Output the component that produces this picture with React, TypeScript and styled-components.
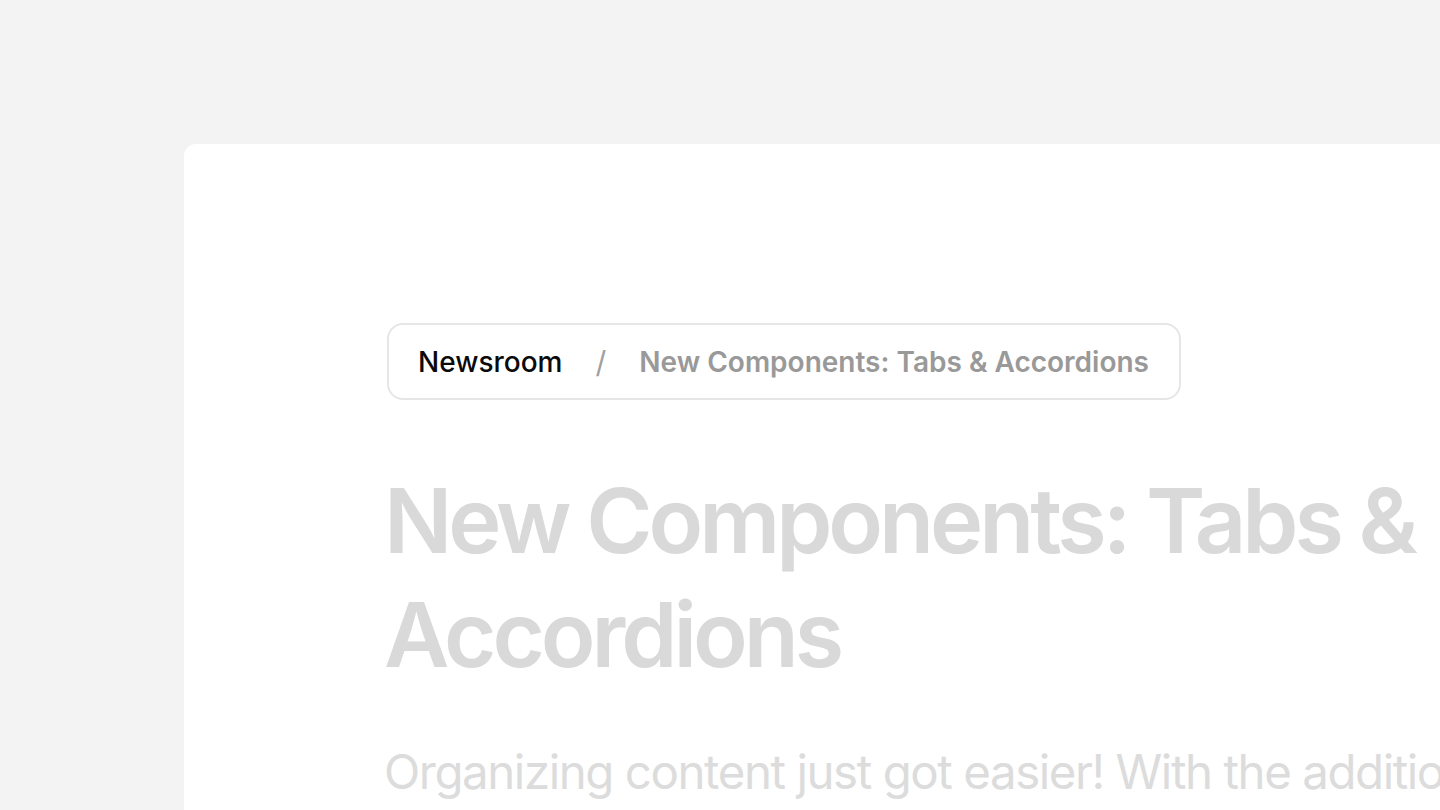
import React from "react";
import styled, { createGlobalStyle } from "styled-components";

const Global = createGlobalStyle`
  html, body {
    margin: 0;
    padding: 0;
    background: #f3f3f3;
    overflow: hidden;
  }
  body {
    font-family: Inter, "Noto Sans", sans-serif;
    -webkit-font-smoothing: antialiased;
  }
`;

const Page = styled.div`
  width: 1440px;
  height: 810px;
  padding: 144px 0 0 184px;
  box-sizing: border-box;
  overflow: hidden;
`;

const Card = styled.main`
  width: 1500px;
  min-height: 900px;
  background: #ffffff;
  border-radius: 12px;
  padding: 179px 0 0 203px;
  box-sizing: border-box;
`;

const Content = styled.article`
  width: 1080px;
  display: flex;
  flex-direction: column;
  align-items: flex-start;
`;

const Breadcrumb = styled.nav`
  display: inline-flex;
  align-items: center;
  gap: 33px;
  height: 77px;
  padding: 0 30px 0 29px;
  box-sizing: border-box;
  border: 2px solid #e6e6e6;
  border-radius: 16px;
  font-size: 28px;
  letter-spacing: 0;
`;

const Crumb = styled.span<{ $current?: boolean }>`
  color: ${(p) => (p.$current ? "#999999" : "#0a0a0a")};
  font-weight: ${(p) => (p.$current ? 600 : 500)};
`;

const Sep = styled.span`
  color: #a0a0a0;
  font-weight: 400;
  font-size: 30px;
`;

const Title = styled.h1`
  margin: 64px 0 0 -3px;
  font-size: 90px;
  line-height: 114px;
  font-weight: 600;
  letter-spacing: -0.045em;
  color: #d9d9d9;
`;

const Lead = styled.p`
  margin: 49px 0 0 -3px;
  font-size: 47.4px;
  line-height: 1.3;
  font-weight: 400;
  letter-spacing: -0.03em;
  color: #dcdcdc;
  white-space: nowrap;
`;

export default function App() {
  return (
    <>
      <Global />
      <Page>
        <Card>
          <Content>
            <Breadcrumb>
              <Crumb>Newsroom</Crumb>
              <Sep>/</Sep>
              <Crumb $current>New Components: Tabs &amp; Accordions</Crumb>
            </Breadcrumb>
            <Title>New Components: Tabs &amp; Accordions</Title>
            <Lead>
              Organizing content just got easier! With the addition of Tabs and Accordions
            </Lead>
          </Content>
        </Card>
      </Page>
    </>
  );
}
